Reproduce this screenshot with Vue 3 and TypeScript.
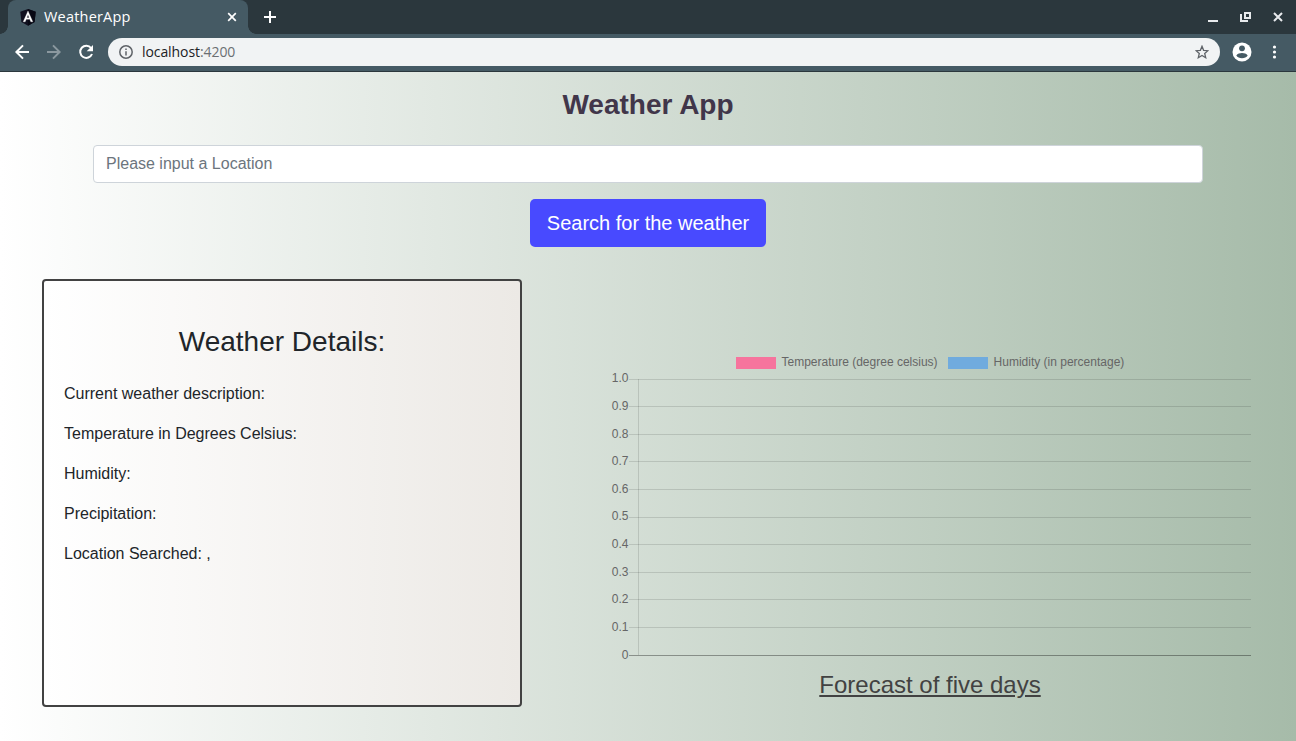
<script setup lang="ts">
const details: string[] = [
  'Current weather description:',
  'Temperature in Degrees Celsius:',
  'Humidity:',
  'Precipitation:',
  'Location Searched: ,',
]
const ticks = ['1.0', '0.9', '0.8', '0.7', '0.6', '0.5', '0.4', '0.3', '0.2', '0.1', '0'].map((label, i) => ({
  label,
  y: Math.floor(18.01 + i * 27.6) + 0.5,
  textY: Math.floor(i * 27.62 + 0.85) + 21,
}))
</script>

<template>
  <div class="window">
    <header class="tabs">
      <div class="tab">
        <svg class="favicon" width="16" height="17" viewBox="0 0 16 17">
          <path d="M8 0 15.7 2.7 14.6 13 8 16.7 1.4 13 .3 2.7z" fill="#10101f" />
          <path d="M8 0v16.7l6.6-3.7 1.1-10.3z" fill="#080814" />
          <path d="M8 2 3.2 12.8h2l1-2.5h3.6l1 2.5h2zm0 3.8 1.2 2.9H6.8z" fill="#fff" stroke="#fff" stroke-width=".3" />
        </svg>
        <span class="tab-title">WeatherApp</span>
        <svg class="tab-close" width="10" height="10" viewBox="0 0 10 10"><path d="M1.2 1.2 8.8 8.8M8.8 1.2 1.2 8.8" stroke="#fff" stroke-width="1.7" /></svg>
      </div>
      <svg class="plus" width="12" height="12" viewBox="0 0 12 12"><path d="M6 0v12M0 6h12" stroke="#fff" stroke-width="2" /></svg>
      <svg class="controls" width="80" height="34" viewBox="0 0 80 34" fill="none" stroke="#e8eaed" stroke-width="2">
        <path d="M4 21h10" />
        <path d="M41 13h5v5h-5z" />
        <path d="M37 14v7h7" />
        <path d="m70 13 8 8m0-8-8 8" />
      </svg>
    </header>
    <div class="toolbar">
      <svg class="nav" width="108" height="37" viewBox="0 0 108 37" fill="none" stroke="#fff" stroke-width="2">
        <path d="M29 18H16.5m6.5-6.6L16.4 18l6.6 6.6" />
        <path d="M47 18h12.5M53 11.4l6.6 6.6-6.6 6.6" stroke="#8b989f" />
        <path d="M91.1 14A6.1 6.1 0 1 0 92 20" />
        <path d="M93 11v6.3h-6.3z" fill="#fff" stroke="none" />
      </svg>
      <div class="address">
        <svg class="info" width="14" height="14" viewBox="0 0 14 14" fill="none" stroke="#5f6368" stroke-width="1.5"><circle cx="7" cy="7" r="6.2" /><path d="M7 6.2v4.3M7 3.4v1.5" /></svg>
        <span class="url">localhost<span class="port">:4200</span></span>
        <svg class="star" width="14" height="14" viewBox="0 0 14 14"><path d="m7 1.3 1.6 4 4.3.4-3.2 2.8 1 4.2L7 10.5l-3.7 2.2 1-4.2-3.2-2.8 4.3-.4z" fill="none" stroke="#5f6368" stroke-width="1.3" /></svg>
      </div>
      <svg class="account" width="20" height="20" viewBox="0 0 20 20"><circle cx="10" cy="10" r="9.5" fill="#fff" /><circle cx="10" cy="6.3" r="2.9" fill="#455a64" /><path d="M4.3 13.4c1.2-1.7 3.5-2.4 5.7-2.4s4.5.7 5.7 2.4c-1.2 1.8-3.2 2.8-5.7 2.8s-4.5-1-5.7-2.8z" fill="#455a64" /></svg>
      <svg class="menu" width="5" height="14" viewBox="0 0 5 14" fill="#fff"><circle cx="2.5" cy="2" r="1.6" /><circle cx="2.5" cy="7" r="1.6" /><circle cx="2.5" cy="12" r="1.6" /></svg>
    </div>
    <main class="page">
      <h1>Weather App</h1>
      <form @submit.prevent>
        <input type="text" placeholder="Please input a Location" />
        <button type="submit">Search for the weather</button>
      </form>
      <div class="content">
        <section class="card">
          <h2>Weather Details:</h2>
          <p v-for="detail in details" :key="detail">{{ detail }}</p>
        </section>
        <section class="forecast">
          <div class="legend">
            <span class="swatch pink"></span><span class="legend-label first">Temperature (degree celsius)</span>
            <span class="swatch blue"></span><span class="legend-label">Humidity (in percentage)</span>
          </div>
          <svg class="chart" width="660" height="300" viewBox="0 0 660 300">
            <g v-for="tick in ticks" :key="tick.label">
              <text x="28.5" :y="tick.textY" text-anchor="end">{{ tick.label }}</text>
              <path :d="`M29 ${tick.y}H651`" :class="{ axis: tick.label === '0' }" />
            </g>
            <path d="M38.5 18V294" />
          </svg>
          <h3>Forecast of five days</h3>
        </section>
      </div>
    </main>
  </div>
</template>

<style>
body { margin: 0; overflow: hidden; }
</style>

<style scoped>
* { box-sizing: border-box; }
.window { width: 1296px; height: 741px; overflow: hidden; display: flex; flex-direction: column; font-family: "Liberation Sans", Arial, sans-serif; color: #212529; }
svg { display: block; flex-shrink: 0; }
.tabs { height: 34px; background: #2b373d; display: flex; align-items: center; padding-left: 8px; }
.tab { position: relative; width: 240px; height: 34px; background: #455a64; border-radius: 8px 8px 0 0; display: flex; align-items: center; padding: 0 11px 0 12px; }
.tab::before, .tab::after { content: ""; position: absolute; bottom: 0; width: 8px; height: 8px; }
.tab::before { left: -8px; background: radial-gradient(circle at 0 0, transparent 7.5px, #455a64 8px); }
.tab::after { right: -8px; background: radial-gradient(circle at 100% 0, transparent 7.5px, #455a64 8px); }
.tab-title { margin-left: 8px; color: #fff; font: 14.5px/20px "Open Sans", sans-serif; letter-spacing: .2px; }
.tab-close { margin-left: auto; }
.plus { margin-left: 16px; }
.controls { margin-left: auto; margin-right: 12px; }
.toolbar { height: 38px; background: #455a64; border-bottom: 1px solid #2b373d; padding-bottom: 1px; display: flex; align-items: center; }
.address { width: 1112px; height: 28px; border-radius: 14px; background: #f1f3f4; display: flex; align-items: center; padding: 0 11px; }
.url { margin-left: 9px; color: #202124; font: 14px/20px "Open Sans", sans-serif; letter-spacing: -.08px; }
.port { color: #6b6f73; }
.star { margin-left: auto; }
.account { margin-left: 12px; }
.menu { margin-left: 20px; }
.page { height: 669px; background: linear-gradient(to right, #fff 0%, #a6bba9 100%); display: flex; flex-direction: column; }
h1 { margin: 16px 0 0; height: 34px; text-align: center; font-size: 28px; line-height: 34px; color: #41364a; }
form { margin-top: 23px; display: flex; flex-direction: column; align-items: center; gap: 16px; }
input { width: 1110px; height: 38px; border: 1px solid #ced4da; border-radius: 4px; padding: 6px 12px; background: #fff; font: 16px/24px "Liberation Sans", Arial, sans-serif; }
input::placeholder { color: #6c757d; opacity: 1; }
button { width: 236px; height: 48px; border: 0; border-radius: 5px; background: #484aff; color: #fff; padding: 0; font: 20px/30px "Liberation Sans", Arial, sans-serif; }
.content { display: flex; margin-top: 32px; padding-left: 42px; }
.card { width: 480px; height: 428px; border: 2px solid #424242; border-radius: 4px; padding: 44px 20px 0; background: linear-gradient(to right, #fff, #ece9e5); }
h2 { margin: 0 0 23px; text-align: center; font-size: 28px; line-height: 34px; font-weight: 400; }
p { margin: 0 0 16px; font-size: 16px; line-height: 24px; }
.forecast { width: 660px; margin-left: 78px; padding-top: 76px; }
.legend { display: flex; align-items: center; height: 14px; padding-left: 135.5px; color: #666; font-size: 12px; line-height: 14px; white-space: nowrap; }
.swatch { width: 40px; height: 12px; margin: 2px 6px 0 0; }
.pink { background: #f6749d; }
.blue { background: #70abde; }
.first { margin-right: 10px; }
.chart { margin-top: -8px; }
.chart text { font-size: 12px; fill: #666; }
.chart path { stroke: rgba(0, 0, 0, .12); stroke-width: 1; }
.chart .axis { stroke: rgba(0, 0, 0, .35); }
h3 { margin: 9px 0 0; text-align: center; font-size: 24px; line-height: 29px; font-weight: 400; text-decoration: underline; color: #424242; }
</style>
